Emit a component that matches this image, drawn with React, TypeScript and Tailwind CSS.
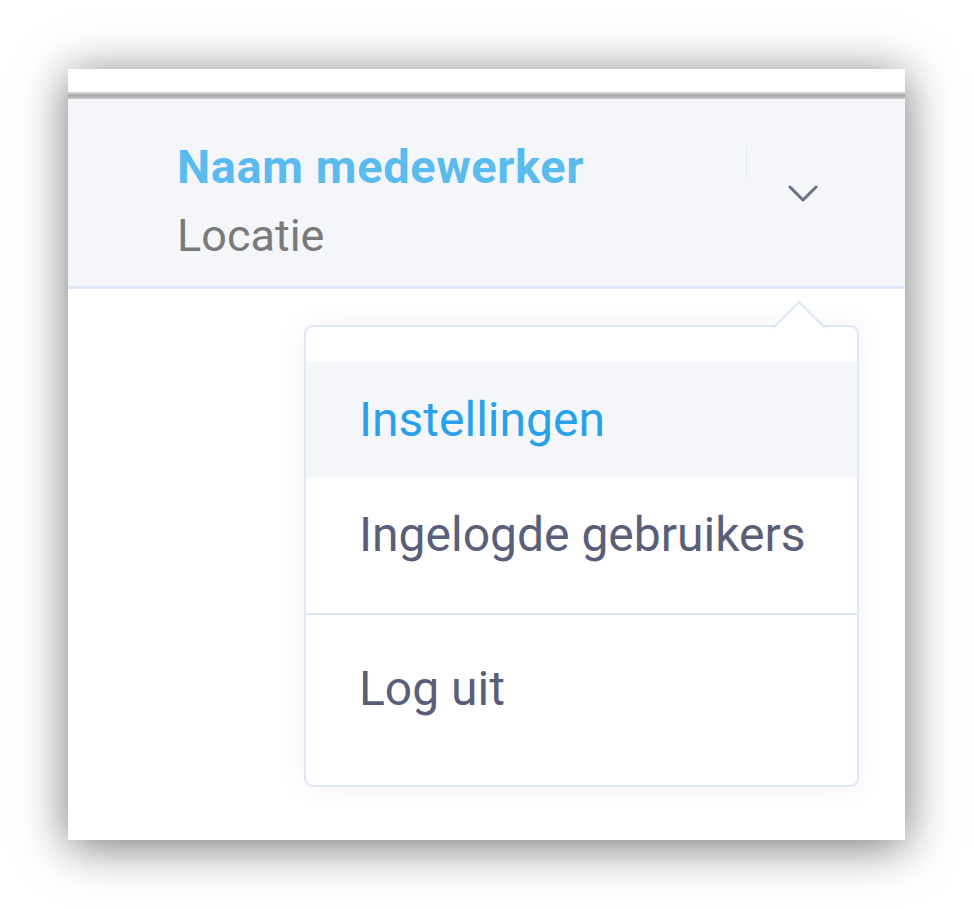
const menuItems = [
  { label: "Instellingen", active: true },
  { label: "Ingelogde gebruikers", active: false },
];

function UserMenu() {
  return (
    <div className="absolute left-[236px] top-[256px] w-[555px] h-[462px] rounded-[9px] border-2 border-[#dde7f8] bg-white shadow-[0_0_30px_rgba(0,0,0,0.06)]">
      {/* caret pointing at the chevron */}
      <svg
        className="absolute -top-[26px] right-[31px]"
        width="54"
        height="28"
        viewBox="0 0 54 28"
      >
        <path d="M1 27 L27 1 L53 27" fill="#fff" stroke="#dde7f8" strokeWidth="2" />
      </svg>

      <div className="pt-[35px] pb-[21px]">
        {menuItems.map((item) => (
          <div
            key={item.label}
            className={
              item.active
                ? "flex items-center h-[115px] pl-[53px] bg-[#f5f6fa] text-[#27a2ea]"
                : "flex items-center h-[115px] pl-[53px] text-[#595e79]"
            }
          >
            <span className="text-[48px] leading-none">{item.label}</span>
          </div>
        ))}
      </div>
      <div className="h-[2px] bg-[#dde7f8]" />
      <div className="pt-[16px]">
        <div className="flex items-center h-[115px] pl-[53px] text-[#595e79]">
          <span className="text-[48px] leading-none">Log uit</span>
        </div>
      </div>
    </div>
  );
}

export default function App() {
  return (
    <div className="min-h-[909px] bg-white pt-[69px] pl-[68px] font-['Roboto',sans-serif]">
      <div className="relative w-[837px] h-[771px] bg-white shadow-[0_6px_45px_rgba(0,0,0,0.55)]">
        <div className="h-[23px] bg-white" />
        <div className="h-[7px] bg-gradient-to-b from-[#d8d8d8] via-[#a8a8a8] to-[#cfcfcf]" />

        <header className="flex justify-between h-[190px] bg-[#f5f6fa] border-b-[3px] border-[#dfe8f8] pl-[109px] pr-[87px] pt-[33px]">
          <div>
            <div className="text-[47px] leading-[69px] font-bold tracking-[0.6px] text-[#5abbee]">Naam medewerker</div>
            <div className="text-[45px] leading-[69px] text-[#7a7a7a]">Locatie</div>
          </div>
          <div className="flex items-start gap-[41px]">
            <div className="mt-[16px] w-px h-[30px] bg-[#e0e8f4]" />
            <svg className="mt-[53px]" width="30" height="17" viewBox="0 0 30 17" fill="none">
              <polyline
                points="2,2 15,15 28,2"
                stroke="#6b7086"
                strokeWidth="3"
                strokeLinecap="round"
                strokeLinejoin="round"
              />
            </svg>
          </div>
        </header>

        <UserMenu />
      </div>
    </div>
  );
}
